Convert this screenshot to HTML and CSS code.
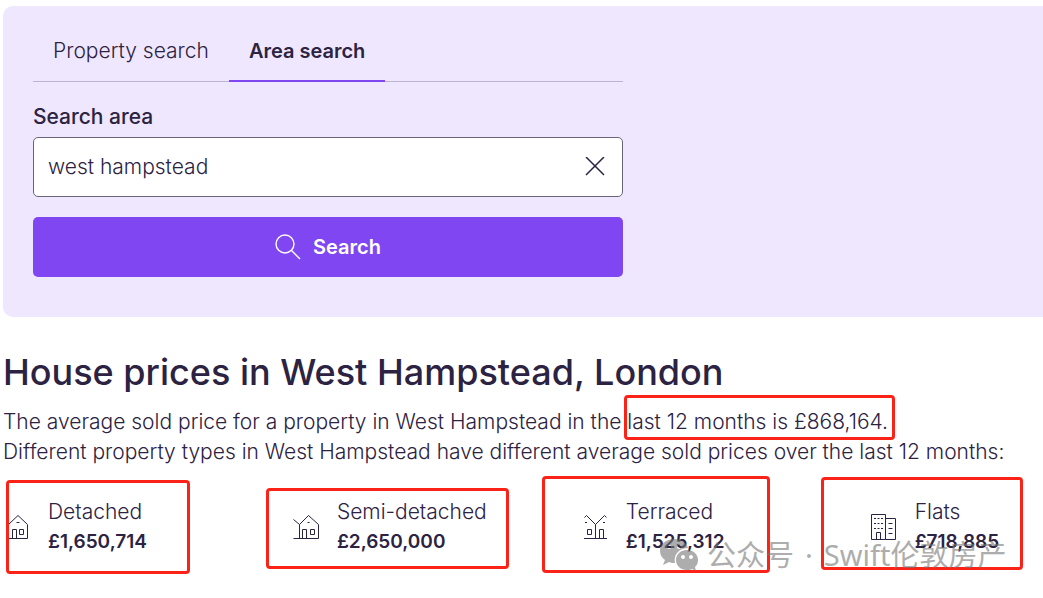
FILE: index.html
```
<!DOCTYPE html>
<html lang="en">
<head>
  <meta charset="UTF-8" />
  <meta name="viewport" content="width=device-width, initial-scale=1.0" />
  <title>House prices in West Hampstead, London</title>
  <link rel="stylesheet" href="styles.css">
</head>
<body>

  <main class="page">
    <!-- Search panel -->
    <section class="search-panel">
      <div class="search-inner">
        <nav class="tabs">
          <a href="#property" class="tab">Property search</a>
          <a href="#area" class="tab active" aria-current="page">Area search</a>
        </nav>
        <form class="search-form">
          <label for="area">Search area</label>
          <div class="field">
            <input type="text" id="area" value="west hampstead" />
            <button type="button" class="clear-button" aria-label="Clear">
              <svg width="20" height="20" viewBox="0 0 20 20"><path d="M1 0l18 18M19 0L1 18" /></svg>
            </button>
          </div>
          <button type="submit" class="search-button">
            <svg width="26" height="26" viewBox="0 0 26 26"><circle cx="10" cy="10" r="9" /><path d="M16.5 16.5L25 25" /></svg>
            Search
          </button>
        </form>
      </div>
    </section>

    <!-- Prices -->
    <section class="prices">
      <h1>House prices in West Hampstead, London</h1>
      <p>The average sold price for a property in West Hampstead in the last 12 months is £868,164.</p>
      <p>Different property types in West Hampstead have different average sold prices over the last 12 months:</p>

      <div class="stats">
        <div class="stat">
          <svg class="icon" width="30" height="30" viewBox="0 0 30 30"><path d="M5.500 26.500V12.500L15 3.500L24.500 12.500V26.500ZM9.500 26.500V17.500H13.500V26.500M16.500 17.500H20.500V22.500H16.500ZM13.500 10.500H16.500" /></svg>
          <div><div>Detached</div><strong>£1,650,714</strong></div>
        </div>
        <div class="stat">
          <svg class="icon" width="30" height="30" viewBox="0 0 30 30"><path d="M1.500 26.500H26.500V12.500L16.500 3.500L7.500 12.500V26.500M7.500 12.500L1.500 7.500M10.500 26.500V17.500H14.500V26.500M18.500 17.500H22.500V22.500H18.500ZM15.500 10.500H17.500" /></svg>
          <div><div>Semi-detached</div><strong>£2,650,000</strong></div>
        </div>
        <div class="stat">
          <svg class="icon" width="30" height="30" viewBox="0 0 30 30"><path d="M3 26.500H26M3.500 5.500L5.500 3.500L14.500 12.500L23.500 3.500L25.500 5.500M14.500 12.500V26.500M6.500 17.500H10.500V22.500H6.500ZM18.500 26.500V17.500H22.500V26.500M4 10.500H6M22 10.500H24" /></svg>
          <div><div>Terraced</div><strong>£1,525,312</strong></div>
        </div>
        <div class="stat">
          <svg class="icon" width="30" height="30" viewBox="0 0 30 30"><path d="M1.500 27.500V2.500H15.500V27.500ZM15.500 6.500H25.500V27.500H15.500M6.500 27.500V20.500H10.500V27.500M4 6.500H6M7.500 6.500H9.500M11 6.500H13M4 11.500H6M7.500 11.500H9.500M11 11.500H13M4 16.500H6M7.500 16.500H9.500M11 16.500H13M18.500 11.500H22.500M18.500 16.500H22.500M18.500 21.500H22.500" /></svg>
          <div><div>Flats</div><strong>£718,885</strong></div>
        </div>
      </div>
    </section>

    <!-- Marks over the figures -->
    <div class="mark mark-average"></div>
    <div class="mark mark-detached"></div>
    <div class="mark mark-semi"></div>
    <div class="mark mark-terraced"></div>
    <div class="mark mark-flats"></div>

    <div class="watermark">
      <svg width="40" height="34" viewBox="0 0 40 34">
        <path fill-rule="evenodd" d="M15 1C7 1 1 6 1 13c0 4 2 7 5 9l-2 5 6-3c2 1 4 1 6 1C14 16 21 10 29 10 28 5 22 1 15 1ZM10 7a2 2 0 1 1 0 4 2 2 0 0 1 0-4Zm10 0a2 2 0 1 1 0 4 2 2 0 0 1 0-4Z" />
        <path fill-rule="evenodd" d="M28 12c-6 0-11 4-11 10s5 10 11 10c2 0 3 0 5-1l4 2-1-4c2-2 3-4 3-7 0-6-5-10-11-10Zm-4 5a2 2 0 1 1 0 4 2 2 0 0 1 0-4Zm8 0a2 2 0 1 1 0 4 2 2 0 0 1 0-4Z" />
      </svg>
      <div class="watermark-text">
        <span>公众号</span>
        <span>·</span>
        <span>Swift伦敦房产</span>
      </div>
    </div>
  </main>

</body>
</html>
```
FILE: styles.css
```
* { margin: 0; padding: 0; box-sizing: border-box; }

body {
  background: white;
  color: #2c2242;
  font-family: Inter, sans-serif;
  font-size: 21px;
  font-weight: 300;
  line-height: 30px;
  overflow-x: hidden;
}

svg {
  fill: none;
  stroke: currentColor;
  flex-shrink: 0;
}

button, input { font: inherit; color: inherit; }
button { cursor: pointer; border: none; background: none; }

.page {
  position: relative;
  padding: 6px 0 30px 3px;
}

/* search panel */
.search-panel {
  background: #efe7fd;
  border-radius: 10px 0 0 10px;
  padding: 30px 30px 40px;
}

.search-inner { max-width: 590px; }

.tabs {
  display: flex;
  border-bottom: 1px solid #bdb3d2;
  margin-bottom: 20px;
}

.tab {
  color: inherit;
  text-decoration: none;
  padding: 0 20px 14px;
  margin-bottom: -1px;
  border-bottom: 2px solid transparent;
}

.tab.active {
  font-size: 20px;
  font-weight: 600;
  border-bottom-color: #8046f1;
}

label {
  display: block;
  font-weight: 500;
  margin-bottom: 5px;
}

.field {
  display: flex;
  align-items: center;
  height: 60px;
  background: white;
  border: 1px solid #6b6478;
  border-radius: 5px;
  margin-bottom: 20px;
}

.field input {
  flex: 1;
  min-width: 0;
  padding: 0 14px;
  border: none;
  outline: none;
  background: none;
}

.clear-button {
  display: flex;
  padding: 17px;
}

.clear-button svg { stroke-width: 1.5; }

.search-button {
  display: flex;
  justify-content: center;
  align-items: center;
  gap: 12px;
  width: 100%;
  height: 60px;
  border-radius: 5px;
  background: #8046f1;
  color: white;
  font-size: 20px;
  font-weight: 600;
}

.search-button svg { stroke-width: 1.4; }

/* prices */
.prices { padding-top: 30px; }

h1 {
  font-size: 36px;
  font-weight: 500;
  line-height: 50px;
  margin-bottom: 10px;
}

.stats {
  display: grid;
  grid-template-columns: 5fr 5fr 5fr 3fr;
  margin-top: 30px;
}

.stat {
  display: flex;
  align-items: center;
  gap: 15px;
}

.stat strong {
  display: block;
  font-size: 19px;
  font-weight: 600;
}

/* marks drawn over the text */
.mark {
  position: absolute;
  border: 3px solid #fb2318;
  border-radius: 4px;
  pointer-events: none;
}

.mark-average { left: 624px; top: 395px; width: 271px; height: 45px; }
.mark-detached { left: 6px; top: 480px; width: 184px; height: 94px; }
.mark-semi { left: 266px; top: 488px; width: 243px; height: 81px; }
.mark-terraced { left: 542px; top: 476px; width: 228px; height: 97px; }
.mark-flats { left: 821px; top: 477px; width: 202px; height: 93px; }

.watermark {
  position: absolute;
  left: 659px;
  top: 537px;
  display: flex;
  align-items: center;
  gap: 8px;
  color: #777;
  font-family: "Noto Sans", "Noto Sans CJK SC", sans-serif;
  font-size: 29px;
  font-weight: 400;
  line-height: 36px;
  white-space: nowrap;
  opacity: 0.6;
  pointer-events: none;
}

.watermark svg { fill: currentColor; stroke: none; }

.watermark-text {
  display: flex;
  gap: 11px;
}
```
